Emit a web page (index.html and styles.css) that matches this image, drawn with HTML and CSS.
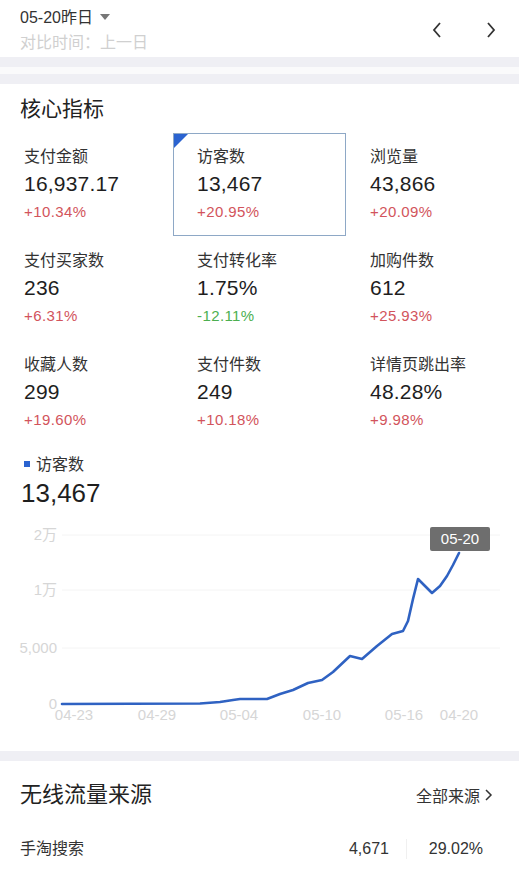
FILE: index.html
```html
<!DOCTYPE html>
<html lang="zh-CN">
<head>
    <meta charset="UTF-8">
    <meta name="viewport" content="width=device-width, initial-scale=1.0">
    <title>核心指标</title>
    <link rel="stylesheet" href="styles.css">
</head>
<body>
    <div class="topbar">
        <div class="date">
            <div class="date-main">05-20昨日 <span class="caret"></span></div>
            <div class="date-sub">对比时间：上一日</div>
        </div>
        <div class="nav">
            <svg width="12" height="18" viewBox="0 0 12 18"><path d="M9 2 L3 9 L9 16" fill="none" stroke="#333" stroke-width="1.8"/></svg>
            <svg width="12" height="18" viewBox="0 0 12 18"><path d="M3 2 L9 9 L3 16" fill="none" stroke="#333" stroke-width="1.8"/></svg>
        </div>
    </div>
    <div class="sep"></div>
    <div class="sep-light"></div>
    <div class="sep"></div>

    <div class="card card-main">
        <h2 class="card-title">核心指标</h2>
        <div class="grid">
            <div class="cell">
                <div class="label">支付金额</div>
                <div class="value">16,937.17</div>
                <div class="change up">+10.34%</div>
            </div>
            <div class="cell active">
                <div class="label">访客数</div>
                <div class="value">13,467</div>
                <div class="change up">+20.95%</div>
            </div>
            <div class="cell">
                <div class="label">浏览量</div>
                <div class="value">43,866</div>
                <div class="change up">+20.09%</div>
            </div>
            <div class="cell">
                <div class="label">支付买家数</div>
                <div class="value">236</div>
                <div class="change up">+6.31%</div>
            </div>
            <div class="cell">
                <div class="label">支付转化率</div>
                <div class="value">1.75%</div>
                <div class="change down">-12.11%</div>
            </div>
            <div class="cell">
                <div class="label">加购件数</div>
                <div class="value">612</div>
                <div class="change up">+25.93%</div>
            </div>
            <div class="cell">
                <div class="label">收藏人数</div>
                <div class="value">299</div>
                <div class="change up">+19.60%</div>
            </div>
            <div class="cell">
                <div class="label">支付件数</div>
                <div class="value">249</div>
                <div class="change up">+10.18%</div>
            </div>
            <div class="cell">
                <div class="label">详情页跳出率</div>
                <div class="value">48.28%</div>
                <div class="change up">+9.98%</div>
            </div>
        </div>

        <div class="legend"><span class="dot"></span>访客数</div>
        <div class="big-value">13,467</div>

        <svg class="chart" width="519" height="210" viewBox="0 0 519 210">
            <g stroke="#f4f4f4" stroke-width="1">
                <line x1="62" y1="16" x2="500" y2="16"/>
                <line x1="62" y1="71" x2="500" y2="71"/>
                <line x1="62" y1="129" x2="500" y2="129"/>
            </g>
            <g class="axis" text-anchor="end">
                <text x="57" y="21">2万</text>
                <text x="57" y="76">1万</text>
                <text x="57" y="134">5,000</text>
                <text x="57" y="190">0</text>
            </g>
            <g class="axis" text-anchor="middle">
                <text x="74" y="201">04-23</text>
                <text x="157" y="201">04-29</text>
                <text x="239" y="201">05-04</text>
                <text x="322" y="201">05-10</text>
                <text x="404" y="201">05-16</text>
                <text x="459" y="201">04-20</text>
            </g>
            <polyline fill="none" stroke="#2f62c2" stroke-width="2.6" stroke-linejoin="round" stroke-linecap="round"
                points="62,185 200,184.5 220,183 233,181 240,180 267,180 280,175 293,171 308,164 322,161 333,153 350,137 362,140 377,127 392,115 403,112 408,102 413,80 418,60 424,66 432,74 440,67 447,57 453,46 459,34"/>
            <rect x="430" y="8" width="60" height="24" rx="2" fill="#6e6e6e"/>
            <text class="tip" x="460" y="25" text-anchor="middle">05-20</text>
        </svg>
    </div>

    <div class="sep"></div>

    <div class="card card-source">
        <div class="source-head">
            <h2 class="source-title">无线流量来源</h2>
            <div class="more">全部来源 <svg width="9" height="14" viewBox="0 0 9 14"><path d="M2 2 L7 7 L2 12" fill="none" stroke="#333" stroke-width="1.5"/></svg></div>
        </div>
        <div class="source-row">
            <span class="source-name">手淘搜索</span>
            <span class="source-num">4,671</span>
            <span class="source-pct">29.02%</span>
        </div>
    </div>
</body>
</html>
```

FILE: styles.css
```css
body {
    margin: 0;
    padding: 0;
    background-color: #f0f0f4;
    font-family: "Liberation Sans", "Noto Sans CJK SC", sans-serif;
    color: #333;
}
.topbar {
    height: 57px;
    box-sizing: border-box;
    background-color: #fff;
    display: flex;
    justify-content: space-between;
    align-items: flex-start;
    padding: 8px 20px 0;
}
.date-main {
    font-size: 16px;
    line-height: 20px;
    color: #333;
}
.caret {
    display: inline-block;
    width: 0;
    height: 0;
    border-left: 5px solid transparent;
    border-right: 5px solid transparent;
    border-top: 6px solid #777;
    vertical-align: middle;
    margin-left: 3px;
    margin-top: -3px;
}
.date-sub {
    font-size: 16px;
    line-height: 20px;
    color: #d0d0d0;
    margin-top: 5px;
}
.nav {
    display: flex;
    gap: 42px;
    padding-right: 2px;
    margin-top: 13px;
}
.sep {
    height: 10px;
    background-color: #efeff4;
}
.sep-light {
    height: 7px;
    background-color: #fafafb;
}
.card {
    background-color: #fff;
}
.card-main {
    padding-bottom: 22px;
}
.card-title {
    margin: 0;
    padding: 12px 20px 0;
    font-size: 21px;
    font-weight: normal;
    line-height: 26px;
    color: #222;
}
.grid {
    display: grid;
    grid-template-columns: 173px 173px 173px;
    margin-top: 11px;
}
.cell {
    height: 104px;
    box-sizing: border-box;
    padding: 13px 0 0 23px;
    border: 1px solid transparent;
    position: relative;
}
.cell.active {
    border-color: #8ea8c6;
    height: 103px;
}
.cell.active::before {
    content: "";
    position: absolute;
    left: 0;
    top: 0;
    border-top: 14px solid #2b63d0;
    border-right: 14px solid transparent;
}
.label {
    font-size: 16px;
    line-height: 20px;
    color: #333;
}
.value {
    font-size: 21px;
    line-height: 26px;
    color: #1e1e1e;
    margin-top: 4px;
    letter-spacing: 0.2px;
}
.change {
    font-size: 15px;
    line-height: 18px;
    margin-top: 6px;
    letter-spacing: 0.4px;
}
.up {
    color: #d2545c;
}
.down {
    color: #4caf50;
}
.legend {
    margin-top: 10px;
    padding-left: 24px;
    font-size: 16px;
    line-height: 20px;
    color: #333;
}
.dot {
    display: inline-block;
    width: 6px;
    height: 6px;
    background-color: #2b63d0;
    margin-right: 6px;
    vertical-align: middle;
    margin-top: -4px;
}
.big-value {
    padding-left: 21px;
    font-size: 26px;
    line-height: 30px;
    color: #1e1e1e;
    margin-top: 3px;
}
.chart {
    display: block;
    margin-top: 11px;
}
.axis {
    font-size: 15px;
    fill: #d6d6d6;
}
.tip {
    font-size: 15px;
    fill: #fff;
}
.source-head {
    display: flex;
    justify-content: space-between;
    align-items: center;
    padding: 20px 26px 0 20px;
}
.source-title {
    margin: 0;
    font-size: 22px;
    font-weight: normal;
    line-height: 28px;
    color: #222;
}
.more {
    font-size: 16px;
    color: #333;
    display: flex;
    align-items: center;
    gap: 4px;
}
.source-row {
    display: flex;
    align-items: center;
    padding: 30px 36px 12px 20px;
    font-size: 16px;
    line-height: 20px;
}
.source-name {
    flex: 1;
    color: #333;
}
.source-num {
    padding-right: 17px;
    border-right: 1px solid #f0f0f0;
    text-align: right;
}
.source-pct {
    width: 76px;
    text-align: right;
}
```
